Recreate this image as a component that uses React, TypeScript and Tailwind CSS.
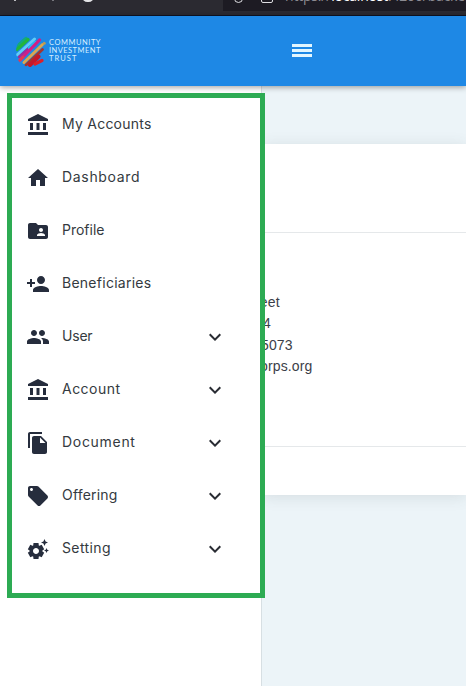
import React from "react";
import {
  MdAccountBalance,
  MdExpandMore,
  MdFileCopy,
  MdFolderShared,
  MdGroup,
  MdHome,
  MdLocalOffer,
  MdPersonAdd,
  MdSettingsSuggest,
} from "react-icons/md";
import type { IconType } from "react-icons";

type Item = { label: string; icon: IconType; tracking: string; expandable?: boolean };

const items: Item[] = [
  { label: "My Accounts", icon: MdAccountBalance, tracking: "tracking-[0.24px]" },
  { label: "Dashboard", icon: MdHome, tracking: "tracking-[0.68px]" },
  { label: "Profile", icon: MdFolderShared, tracking: "tracking-[0px]" },
  { label: "Beneficiaries", icon: MdPersonAdd, tracking: "tracking-[0.26px]" },
  { label: "User", icon: MdGroup, tracking: "tracking-[-0.2px]", expandable: true },
  { label: "Account", icon: MdAccountBalance, tracking: "tracking-[0.48px]", expandable: true },
  { label: "Document", icon: MdFileCopy, tracking: "tracking-[0.7px]", expandable: true },
  { label: "Offering", icon: MdLocalOffer, tracking: "tracking-[0.2px]", expandable: true },
  { label: "Setting", icon: MdSettingsSuggest, tracking: "tracking-[0.38px]", expandable: true },
];

function BrowserBar() {
  return (
    <div className="relative h-4 shrink-0 overflow-hidden border-b border-[#101425] bg-[#2b2a31]">
      <div className="absolute left-[223px] top-0 h-[11px] w-[243px] bg-[#1d1b23]" />
      <div className="absolute left-[14px] top-[-2px] h-[3px] w-[2px] bg-[#bbbbc0]" />
      <div className="absolute left-[52px] top-[-2px] h-[3px] w-[2px] bg-[#77777d]" />
      <div className="absolute left-[82px] top-[-9px] h-[11px] w-[12px] rounded-full border-2 border-[#e4e4e7]" />
      <div className="absolute left-[234px] top-[-7px] h-[10px] w-[9px] rounded-b-full border-[1.5px] border-[#dedee2]" />
      <div className="absolute left-[261px] top-[-6px] h-[9px] w-[12px] rounded-[2px] border-[1.5px] border-[#dedee2]" />
      <div className="absolute left-[285px] top-[-13px] whitespace-nowrap font-['Open_Sans',sans-serif] text-[14px] leading-[18px] tracking-[-0.2px] text-[#8c8b92]">
        https://<span className="text-white">localhost</span>:4200/backend
      </div>
    </div>
  );
}

function Logo() {
  return (
    <div className="flex items-center gap-[3px]">
      <svg width="31" height="32" viewBox="0 0 31 32" fill="none" strokeLinecap="round">
        <defs>
          <clipPath id="round">
            <path d="M15 1H31V32H15C6.5 32 1 25 1 16.5S6.500 1 15 1Z" />
          </clipPath>
        </defs>
        <g clipPath="url(#round)">
          <path d="M1 12L11 3" stroke="#12a884" strokeWidth="3" />
          <path d="M2 14.500L13 4.500" stroke="#22b53c" strokeWidth="3.200" />
          <path d="M2 20L19.500 4" stroke="#5fcdf8" strokeWidth="3" />
          <path d="M4 22L14 13" stroke="#a02a9c" strokeWidth="2.400" />
          <path d="M14 13L20.500 7" stroke="#27b9f2" strokeWidth="2.400" />
          <path d="M6 24L24.500 5" stroke="#d01f86" strokeWidth="3.200" />
          <path d="M4 26L8 22" stroke="#e23a52" strokeWidth="3" />
          <path d="M9 27.500L27.500 9.500" stroke="#d9a650" strokeWidth="3" />
          <path d="M11 30L27.500 14.500" stroke="#a4342f" strokeWidth="2.800" />
          <path d="M15 30L23.500 21.500" stroke="#c4182a" strokeWidth="4" />
          <path d="M20 29L27 25.500" stroke="#dd1f28" strokeWidth="3.200" />
        </g>
        <circle cx="29.2" cy="8.200" r="1.500" fill="#b99a57" />
      </svg>
      <div className="font-[Lato,sans-serif] text-[7.500px] leading-[8px] text-[#d6efff]">
        <div className="whitespace-nowrap tracking-[0.53px]">COMMUNITY</div>
        <div className="whitespace-nowrap tracking-[0.46px]">INVESTMENT</div>
        <div className="whitespace-nowrap tracking-[1.05px]">TRUST</div>
      </div>
    </div>
  );
}

function Header() {
  return (
    <header className="relative z-10 flex h-[70px] shrink-0 items-center bg-[#1e88e5] pl-[15px] shadow-[0_1px_6px_rgba(0,0,0,0.4)]">
      <div className="w-[277px]">
        <Logo />
      </div>
      <div className="mb-[1px] flex w-5 flex-col gap-[2px]">
        <div className="h-[3px] bg-[#e2f6ff]" />
        <div className="h-[3px] bg-[#e2f6ff]" />
        <div className="h-[3px] bg-[#e2f6ff]" />
      </div>
    </header>
  );
}

function Sidebar() {
  return (
    <aside className="w-[262px] shrink-0 border-r border-[#d7dfe3] bg-white pl-[7px] pt-[7px]">
      <nav className="relative z-20 h-[505px] w-[258px] border-[5px] border-[#2dab53] bg-white">
        {items.map(({ label, icon: Icon, tracking, expandable }) => (
          <div key={label} className="flex h-[53px] items-start pl-[14px] pt-[15px] text-[#262d3d]">
            <Icon size={24} className="shrink-0" />
            <span
              className={`ml-3 w-[141px] whitespace-nowrap font-[Inter,sans-serif] text-[14px] leading-[22px] text-[#343a40] ${tracking}`}
            >
              {label}
            </span>
            {expandable && <MdExpandMore size={24} className="shrink-0 text-[#292c33]" />}
          </div>
        ))}
      </nav>
    </aside>
  );
}

function Content() {
  return (
    <main className="min-w-0 flex-1 bg-[#ecf4f8] pt-[58px]">
      <section className="h-[351px] bg-white shadow-[0_2px_14px_rgba(60,80,80,0.13)]">
        <div className="h-[89px] border-b border-[#e5e8ea]" />
        <div className="h-[214px] overflow-hidden border-b border-[#e5e8ea] pt-[59px] font-['Liberation_Sans',Arial,sans-serif] text-[14px] leading-[21.3px] tracking-[0.15px] text-[#3b3e48]">
          <div className="-ml-[7px]">reet</div>
          <div className="pl-[1px]">4</div>
          <div className="-ml-[1px]">5073</div>
          <div className="-ml-[2px]">orps.org</div>
        </div>
      </section>
    </main>
  );
}

export default function App() {
  return (
    <div className="flex h-[686px] w-[466px] flex-col overflow-hidden bg-white">
      <BrowserBar />
      <Header />
      <div className="flex min-h-0 flex-1">
        <Sidebar />
        <Content />
      </div>
    </div>
  );
}
